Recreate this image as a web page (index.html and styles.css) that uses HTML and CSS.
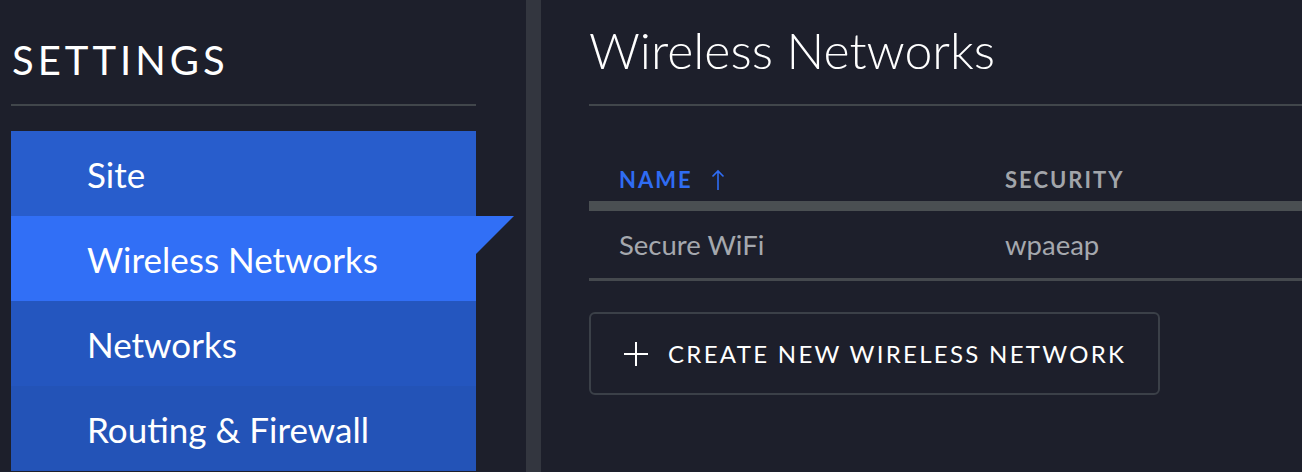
FILE: index.html
```html
<!DOCTYPE html>
<html lang="en">
<head>
<meta charset="utf-8">
<title>Settings - Wireless Networks</title>
<link rel="stylesheet" href="styles.css">
</head>
<body>
<div class="app">
  <aside class="sidebar">
    <h1 class="sidebar-title">SETTINGS</h1>
    <nav class="nav">
      <a class="nav-item nav-site">Site</a>
      <a class="nav-item nav-active">Wireless Networks</a>
      <a class="nav-item nav-networks">Networks</a>
      <a class="nav-item nav-routing">Routing &amp; Firewall</a>
    </nav>
  </aside>
  <div class="divider"></div>
  <main class="main">
    <h2 class="page-title">Wireless Networks</h2>
    <div class="table">
      <div class="thead">
        <div class="th th-active">NAME <svg class="sort-icon" width="14" height="22" viewBox="0 0 14 22"><path d="M7 21V2M1.5 7.5L7 2l5.5 5.5" fill="none" stroke="#2f6cf3" stroke-width="1.6"/></svg></div>
        <div class="th">SECURITY</div>
      </div>
      <div class="tr">
        <div class="td">Secure WiFi</div>
        <div class="td">wpaeap</div>
      </div>
    </div>
    <button class="create-btn">
      <svg class="plus-icon" width="26" height="26" viewBox="0 0 26 26"><path d="M13 1v24M1 13h24" fill="none" stroke="#ffffff" stroke-width="2"/></svg>
      <span>CREATE NEW WIRELESS NETWORK</span>
    </button>
  </main>
</div>
</body>
</html>
```

FILE: styles.css
```css
html, body {
  margin: 0;
  padding: 0;
  background: #1d1f2b;
  overflow: hidden;
}

.app {
  display: flex;
  height: 472px;
  font-family: Lato, "Open Sans", sans-serif;
  color: #ffffff;
}

.sidebar {
  width: 465px;
  padding: 0 50px 0 11px;
  flex-shrink: 0;
}

.sidebar-title {
  margin: 0;
  padding-top: 36px;
  padding-bottom: 20px;
  padding-left: 1px;
  font-size: 40px;
  line-height: 48px;
  font-weight: 400;
  letter-spacing: 4px;
  border-bottom: 2px solid #41464b;
}

.nav {
  margin-top: 25px;
  display: flex;
  flex-direction: column;
}

.nav-item {
  position: relative;
  height: 85px;
  display: flex;
  align-items: center;
  padding-left: 76px;
  font-size: 35px;
  font-weight: 400;
  color: #ffffff;
}

.nav-site { background: #285dcc; }
.nav-active { background: #316ff6; }
.nav-networks { background: #2456bf; }
.nav-routing { background: #2353b7; }

.nav-active::after {
  content: "";
  position: absolute;
  top: 0;
  left: 100%;
  width: 0;
  height: 0;
  border-top: 38px solid #316ff6;
  border-right: 38px solid transparent;
}

.divider {
  width: 15px;
  flex-shrink: 0;
  background: #33363f;
}

.main {
  flex: 1;
  min-width: 0;
  padding-left: 48px;
}

.page-title {
  margin: 0;
  padding-top: 19px;
  padding-bottom: 23px;
  font-size: 50px;
  line-height: 62px;
  font-weight: 300;
  border-bottom: 2px solid #41464b;
}

.table {
  width: 100%;
}

.thead, .tr {
  display: grid;
  grid-template-columns: 386px 1fr;
}

.thead {
  height: 95px;
  border-bottom: 10px solid #4a4f52;
  align-items: end;
}

.th {
  display: flex;
  align-items: center;
  gap: 18px;
  padding: 0 0 8px 30px;
  font-size: 22px;
  font-weight: 700;
  letter-spacing: 2px;
  color: #a2a5aa;
}

.th-active {
  color: #2f6cf3;
}

.sort-icon {
  display: block;
}

.tr {
  height: 67px;
  border-bottom: 3px solid #45494e;
  align-items: center;
}

.td {
  padding-left: 30px;
  font-size: 27.5px;
  font-weight: 400;
  color: #a5a8ae;
}

.create-btn {
  margin-top: 31px;
  width: 571px;
  height: 83px;
  display: flex;
  align-items: center;
  gap: 19px;
  padding: 0 0 0 32px;
  background: transparent;
  border: 2px solid #3b4048;
  border-radius: 6px;
  font-family: Lato, "Open Sans", sans-serif;
  font-size: 24px;
  font-weight: 400;
  letter-spacing: 2.3px;
  color: #ffffff;
}

.plus-icon {
  display: block;
}
```
